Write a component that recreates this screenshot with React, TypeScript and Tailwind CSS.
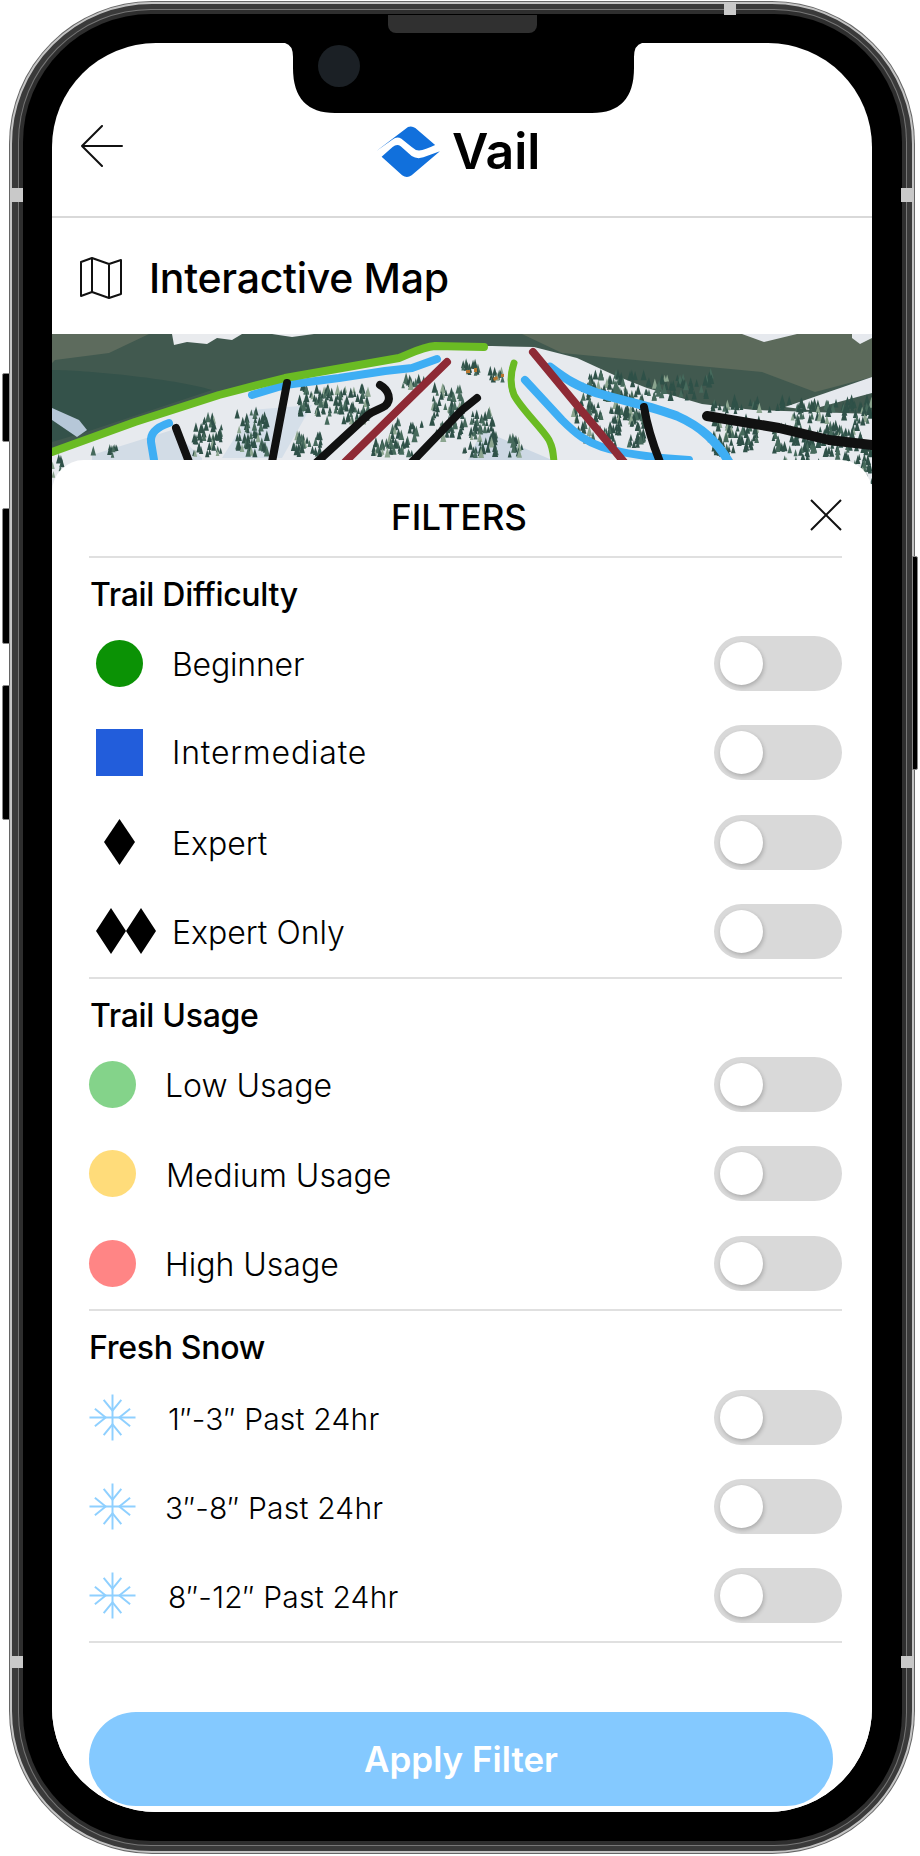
import React from "react";

const clusters: [number, number, number, number, number][] = [
  [140, 92, 30, 36, 46], [185, 85, 30, 43, 52], [245, 60, 35, 28, 44], [272, 62, 45, 34, 62],
  [240, 108, 30, 20, 30], [340, 95, 30, 33, 36], [318, 112, 26, 16, 20], [350, 52, 22, 8, 12],
  [380, 62, 32, 50, 66], [412, 85, 34, 43, 60], [456, 108, 14, 20, 14], [0, 132, 10, 25, 6],
  [38, 120, 36, 8, 10], [410, 38, 18, 8, 14], [438, 44, 16, 10, 12], [530, 48, 130, 24, 110],
  [560, 78, 32, 40, 66], [520, 70, 40, 45, 50], [658, 92, 50, 36, 70], [720, 100, 100, 28, 110],
  [660, 74, 160, 10, 60], [740, 78, 80, 18, 40], [720, 128, 100, 30, 40], [806, 130, 14, 30, 12],
];

function trees() {
  let s = 17;
  const rnd = () => {
    s = (s * 16807) % 2147483647;
    return s / 2147483647;
  };
  const out: { x: number; y: number; h: number; c: string }[] = [];
  clusters.forEach(([x, y, w, h, n]) => {
    for (let i = 0; i < n; i++) {
      const r = rnd();
      out.push({
        x: x + rnd() * w,
        y: y + rnd() * h,
        h: 6 + rnd() * 5,
        c: r < 0.65 ? "#2f5148" : r < 0.9 ? "#466a5c" : "#8ba58f",
      });
    }
  });
  return out.sort((a, b) => a.y - b.y);
}

function MapArt() {
  return (
    <svg viewBox="0 4 820 160" width="820" height="160" className="block">
      <rect x="0" y="4" width="820" height="160" fill="#41594f" />
      <path d="M0 4H97L57 23L3 30L0 33Z" fill="#5d6b5d" />
      <path d="M0 40C30 40 120 48 160 60L40 100L0 112Z" fill="#34524a" />
      <path d="M120 4H190L180 10L165 8L155 14L135 12L122 15Z" fill="#e9ebee" />
      <path d="M220 4H262L240 7Z" fill="#e9ebee" />
      <path d="M0 78L27 90L35 100L25 107L0 90Z" fill="#b6c7d8" />
      <path d="M470 4H820V47L763 62L710 42L510 23Z" fill="#5c6a5b" />
      <path d="M690 4H745L712 12Z" fill="#e6e9ee" />
      <path d="M800 4H820V8L808 14L800 8Z" fill="#e6e9ee" />
      <path d="M733 77L820 47V63L757 80Z" fill="#e6e9ee" />
      <path d="M0 122L83 92L167 65L233 48L347 28L383 16L440 16L482 17L525 28L562 45L595 58L650 74L702 80L820 84V164H0Z" fill="#e7eaee" />
      <path d="M40 125L120 100L150 128L150 164H40Z" fill="#d2dce6" />
      <path d="M430 100L500 130L460 164H400Z" fill="#cdd8e4" />
      <path d="M200 80L260 75L230 128H170Z" fill="#d5dfe9" />
      {trees().map((t, i) => (
        <path key={i} d={`M${t.x} ${t.y - t.h}L${t.x + t.h * 0.28} ${t.y}H${t.x - t.h * 0.28}Z`} fill={t.c} />
      ))}
      <path d="M414 40h4v3h-4zM422 38h3v4h-3zM441 48l4-2l1 3l-4 2zM449 44h3v3h-3z" fill="#b9772f" />
      <g fill="none" strokeLinecap="round" strokeLinejoin="round">
        <path d="M200 65L233 55L287 48L333 41L360 38L385 29" stroke="#3eaef4" strokeWidth="8" />
        <path d="M117 93C105 97 98 103 99 112L102 130" stroke="#3eaef4" strokeWidth="8" />
        <path d="M473 50L510 90C525 105 535 112 550 117C575 125 605 128 637 130" stroke="#3eaef4" strokeWidth="8" />
        <path d="M498 37C515 50 525 56 545 63C575 72 600 76 625 86C650 97 665 112 677 132" stroke="#3eaef4" strokeWidth="9" />
        <path d="M0 122L83 92L167 65L233 48L347 28C360 23 370 17 383 16L432 17" stroke="#6abb23" strokeWidth="8" />
        <path d="M462 33C458 45 458 55 462 65C470 80 490 98 497 110C501 118 501 122 502 132" stroke="#6abb23" strokeWidth="7" />
        <path d="M395 32L293 132" stroke="#8e2a35" strokeWidth="8" />
        <path d="M481 22L572 132" stroke="#8e2a35" strokeWidth="8" />
        <path d="M235 53L220 132" stroke="#111111" strokeWidth="8" />
        <path d="M328 55C337 60 340 70 333 76C327 80 322 80 316 85L265 132" stroke="#111111" strokeWidth="8" />
        <path d="M425 68L410 80L360 132" stroke="#111111" strokeWidth="8" />
        <path d="M124 98L137 132" stroke="#111111" strokeWidth="8" />
        <path d="M592 77C595 95 600 112 608 132" stroke="#111111" strokeWidth="8" />
        <path d="M655 86L727 98L777 110L820 115" stroke="#111111" strokeWidth="10" />
      </g>
    </svg>
  );
}

function Toggle() {
  return (
    <div className="w-[128px] h-[55px] rounded-full bg-[#d9d9d9] flex items-center pl-[6px] shrink-0">
      <div className="w-[43px] h-[43px] rounded-full bg-white shadow-[1px_2px_4px_rgba(0,0,0,0.22)]" />
    </div>
  );
}

function Snow() {
  return (
    <svg viewBox="-24 -24 48 48" width="47" height="47" fill="none" stroke="#8fd0ff" strokeWidth="2">
      <path d="M0 -23.5V23.5M-23.5 0H23.5" />
      <path d="M-9 -18L0 -7L9 -18M-9 18L0 7L9 18M-18 -9L-7 0L-18 9M18 -9L7 0L18 9" />
    </svg>
  );
}

function Row({ icon, label, iconBox, labelClass }: { icon: React.ReactNode; label: string; iconBox: string; labelClass: string }) {
  return (
    <div className="flex items-center h-[55px]">
      <div className={iconBox}>{icon}</div>
      <span className={labelClass}>{label}</span>
      <div className="ml-auto">
        <Toggle />
      </div>
    </div>
  );
}

const rowLabel = "text-[32px] leading-[36px] text-black pt-[2px] font-light tracking-[-0.2px]";
const wideLabel = "text-[32px] leading-[36px] text-black font-light tracking-[0.8px]";
const usageLabel = "text-[32px] leading-[36px] text-black pt-[4px] font-light tracking-[0px]";
const snowLabel = "text-[30px] leading-[36px] text-black pt-[3px] font-light tracking-[0.2px]";

function Heading({ children }: { children: React.ReactNode }) {
  return <div className="pl-[1px] text-[32px] leading-[36px] font-medium text-black tracking-[-0.3px]">{children}</div>;
}

function DiamondSvg({ w }: { w: number }) {
  return w === 31 ? (
    <svg width="31" height="46" viewBox="0 0 31 46">
      <path d="M15.5 0L31 23L15.5 46L0 23Z" fill="#000" />
    </svg>
  ) : (
    <svg width="60" height="46" viewBox="0 0 60 46">
      <path d="M15 0L30 23L15 46L0 23ZM45 0L60 23L45 46L30 23Z" fill="#000" />
    </svg>
  );
}

export default function App() {
  return (
    <div className="w-[920px] h-[1856px] bg-white pt-[2px] pl-[10px] overflow-hidden [font-family:Inter,sans-serif]">
      <div className="relative w-[904px] h-[1851px] rounded-[142px] border-[2px] border-[#c4c4c4] bg-[#3a3a3a] pl-[11px] pr-[10px] py-[10px] shadow-[0_0_0_1px_#666666]">
        {/* side buttons */}
        <div className="absolute left-[-10px] top-[369px] w-[8px] h-[69px] bg-black border border-[#888] rounded-l-[2px]" />
        <div className="absolute left-[-10px] top-[504px] w-[8px] h-[136px] bg-black border border-[#888] rounded-l-[2px]" />
        <div className="absolute left-[-10px] top-[681px] w-[8px] h-[135px] bg-black border border-[#888] rounded-l-[2px]" />
        <div className="absolute right-[-6px] top-[552px] w-[6px] h-[214px] bg-black border border-[#888] rounded-r-[2px]" />
        {/* antenna bands */}
        <div className="absolute left-[-2px] top-[184px] w-[13px] h-[14px] bg-[#c9c9c9]" />
        <div className="absolute right-[-2px] top-[184px] w-[13px] h-[14px] bg-[#c9c9c9]" />
        <div className="absolute left-[-2px] top-[1652px] w-[13px] h-[12px] bg-[#c9c9c9]" />
        <div className="absolute right-[-2px] top-[1652px] w-[13px] h-[12px] bg-[#c9c9c9]" />
        <div className="absolute left-[712px] top-[-2px] w-[12px] h-[13px] bg-[#c9c9c9]" />
        {/* speaker */}
        <div className="absolute left-[376px] top-[11px] z-20 w-[149px] h-[18px] rounded-b-[8px] bg-[#303030]" />

        <div className="w-full h-full rounded-[128px] bg-black pt-[29px] pl-[29px] shadow-[0_0_0_4px_#2e2e2e,0_0_0_5px_#777777]">
          <div className="relative w-[820px] h-[1769px] rounded-[104px] overflow-hidden bg-white flex flex-col">
            {/* notch */}
            <svg className="absolute left-[233px] top-0 z-20" width="357" height="70" viewBox="0 0 357 70">
              <path d="M0 0Q8 2 8 14L8 25Q8 70 50 70L307 70Q349 70 349 25L349 14Q349 2 357 0Z" fill="#000" />
              <ellipse cx="54" cy="23" rx="21" ry="21" fill="#1b2025" />
            </svg>

            {/* header */}
            <div className="h-[175px] shrink-0 border-b-[2px] border-[#d9d9d9] flex items-start pt-[82px] pl-[29px]">
              <svg width="42" height="42" viewBox="0 0 42 42" fill="none" stroke="#111" strokeWidth="2" strokeLinecap="round" strokeLinejoin="round">
                <path d="M21 1L1 21L21 41M1 21H41" />
              </svg>
              <div className="ml-[252px] flex items-center">
                <svg width="66" height="53" viewBox="28 26 180 154" preserveAspectRatio="none">
                  <path d="M30 103L118 32Q128 27 138 35L192 84Q165 98 148 100Q138 100 128 90L100 66Q88 58 76 68Z" fill="#1170dc" />
                  <path d="M46 118L76 90Q88 80 98 88L128 116Q142 126 160 120L205 102L128 172Q115 182 102 172Z" fill="#1170dc" />
                </svg>
                <span className="ml-[11px] text-[50px] leading-[51px] font-semibold text-black">Vail</span>
              </div>
            </div>

            {/* title */}
            <div className="h-[116px] shrink-0 flex items-center pl-[28px] pt-[3px]">
              <svg width="42" height="42" viewBox="0 0 42 42" fill="none" stroke="#111" strokeWidth="2" strokeLinejoin="round">
                <path d="M1 5L12 1L29 7L41 3V37L29 41L12 35L1 39ZM12 1V35M29 7V41" />
              </svg>
              <span className="ml-[27px] text-[41px] leading-[48px] font-medium text-black tracking-[-0.3px]">Interactive Map</span>
            </div>

            <div className="shrink-0 h-[160px]">
              <MapArt />
            </div>

            {/* panel */}
            <div className="relative z-10 mt-[-34px] flex-1 bg-white rounded-t-[32px] pl-[37px] pr-[30px]">
              <div className="relative h-[98px] border-b-[2px] border-[#e0e0e0] flex items-center justify-center pt-[18px] pr-[13px]">
                <span className="text-[35px] leading-[40px] font-medium text-black">FILTERS</span>
                <svg className="absolute right-0 top-[39px]" width="32" height="32" viewBox="0 0 32 32" fill="none" stroke="#111" strokeWidth="2">
                  <path d="M1 1L31 31M31 1L1 31" />
                </svg>
              </div>

              <div className="pt-[19px] pb-[18px] border-b-[2px] border-[#e0e0e0]">
                <Heading>Trail Difficulty</Heading>
                <div className="mt-[23px] flex flex-col gap-[34.3px]">
                  <Row
                    iconBox="ml-[7px] w-[60px] flex items-center"
                    labelClass={`ml-[16px] ${rowLabel}`}
                    label="Beginner"
                    icon={<div className="w-[47px] h-[47px] rounded-full bg-[#0b9205]" />}
                  />
                  <Row
                    iconBox="ml-[7px] w-[60px] flex items-center"
                    labelClass={`ml-[16px] ${wideLabel}`}
                    label="Intermediate"
                    icon={<div className="w-[47px] h-[47px] bg-[#225ddb]" />}
                  />
                  <Row
                    iconBox="ml-[15px] w-[52px] flex items-center"
                    labelClass={`ml-[16px] ${usageLabel}`}
                    label="Expert"
                    icon={<DiamondSvg w={31} />}
                  />
                  <Row
                    iconBox="ml-[7px] w-[60px] flex items-center"
                    labelClass={`ml-[16px] ${usageLabel}`}
                    label="Expert Only"
                    icon={<DiamondSvg w={60} />}
                  />
                </div>
              </div>

              <div className="pt-[19px] pb-[18px] border-b-[2px] border-[#e0e0e0]">
                <Heading>Trail Usage</Heading>
                <div className="mt-[23px] flex flex-col gap-[34.5px]">
                  <Row iconBox="w-[47px]" labelClass={`ml-[29px] ${usageLabel}`} label="Low Usage" icon={<div className="w-[47px] h-[47px] rounded-full bg-[#84d38a]" />} />
                  <Row iconBox="w-[47px]" labelClass={`ml-[30px] ${usageLabel}`} label="Medium Usage" icon={<div className="w-[47px] h-[47px] rounded-full bg-[#ffdc7a]" />} />
                  <Row iconBox="w-[47px]" labelClass={`ml-[29px] ${usageLabel}`} label="High Usage" icon={<div className="w-[47px] h-[47px] rounded-full bg-[#ff8585]" />} />
                </div>
              </div>

              <div className="pt-[19px] pb-[18px] border-b-[2px] border-[#e0e0e0]">
                <div className="ml-[-1px]">
                  <Heading>Fresh Snow</Heading>
                </div>
                <div className="mt-[24px] flex flex-col gap-[34px]">
                  <Row iconBox="w-[47px] h-[47px]" labelClass={`ml-[32px] ${snowLabel}`} label="1″-3″ Past 24hr" icon={<Snow />} />
                  <Row iconBox="w-[47px] h-[47px]" labelClass={`ml-[29px] ${snowLabel}`} label="3″-8″ Past 24hr" icon={<Snow />} />
                  <Row iconBox="w-[47px] h-[47px]" labelClass={`ml-[32px] ${snowLabel}`} label="8″-12″ Past 24hr" icon={<Snow />} />
                </div>
              </div>

              <div className="mt-[69px] mr-[9px] h-[94px] rounded-full bg-[#84c9ff] flex items-center justify-center">
                <span className="text-[35px] leading-[44px] font-semibold text-white">Apply Filter</span>
              </div>
            </div>
          </div>
        </div>
      </div>
    </div>
  );
}
